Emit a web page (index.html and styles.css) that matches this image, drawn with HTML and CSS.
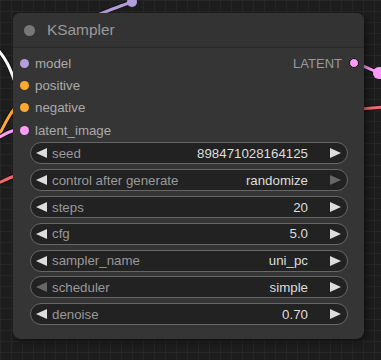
FILE: index.html
```html
<!DOCTYPE html>
<html lang="en">
<head>
  <meta charset="UTF-8">
  <meta name="viewport" content="width=device-width, initial-scale=1.0">
  <title>KSampler</title>
  <link rel="stylesheet" href="styles.css">
</head>
<body>
  <div class="canvas">
    <!-- links behind the node -->
    <svg class="wires" width="381" height="360" viewBox="0 0 381 360">
      <path class="edge" d="M95 16 C110 10 120 6 132 2" stroke="#111" stroke-width="5"/>
      <path d="M95 16 C110 10 120 6 132 2" stroke="#b39ddb" stroke-width="3"/>
      <circle cx="132" cy="2" r="5" fill="#b39ddb"/>

      <path d="M-4 48 C6 58 10 68 15 82" stroke="#111" stroke-width="5"/>
      <path d="M-4 48 C6 58 10 68 15 82" stroke="#fff" stroke-width="3"/>

      <path d="M-2 137 C4 126 8 116 15 108" stroke="#111" stroke-width="5"/>
      <path d="M-2 137 C4 126 8 116 15 108" stroke="#ffa931" stroke-width="3"/>
      <path d="M-2 138 C4 134 8 132 15 130" stroke="#111" stroke-width="5"/>
      <path d="M-2 138 C4 134 8 132 15 130" stroke="#ff9cf9" stroke-width="3"/>
      <path d="M-2 183 C4 181 8 178 15 176" stroke="#111" stroke-width="5"/>
      <path d="M-2 183 C4 181 8 178 15 176" stroke="#f06a6a" stroke-width="3"/>

      <path d="M358 64 C366 67 372 70 379 73" stroke="#111" stroke-width="5"/>
      <path d="M358 64 C366 67 372 70 379 73" stroke="#ff9cf9" stroke-width="3"/>
      <circle cx="379" cy="73" r="6" fill="#ff9cf9"/>
      <path d="M360 109 L383 107" stroke="#111" stroke-width="5"/>
      <path d="M360 109 L383 107" stroke="#f06a6a" stroke-width="3"/>
    </svg>

    <div class="node">
      <div class="title">
        <span class="title-dot"></span>
        <span class="title-text">KSampler</span>
      </div>

      <div class="slots">
        <div class="inputs">
          <div class="slot"><span class="dot model"></span>model</div>
          <div class="slot"><span class="dot cond"></span>positive</div>
          <div class="slot"><span class="dot cond"></span>negative</div>
          <div class="slot"><span class="dot latent"></span>latent_image</div>
        </div>
        <div class="outputs">
          <div class="slot out">LATENT<span class="dot latent ring"></span></div>
        </div>
      </div>

      <div class="widgets">
        <div class="widget">
          <svg class="arr" viewBox="0 0 11 10"><path d="M0 5 L11 0 L11 10 Z"/></svg>
          <span class="label">seed</span>
          <span class="value">898471028164125</span>
          <svg class="arr" viewBox="0 0 11 10"><path d="M11 5 L0 0 L0 10 Z"/></svg>
        </div>
        <div class="widget">
          <svg class="arr" viewBox="0 0 11 10"><path d="M0 5 L11 0 L11 10 Z"/></svg>
          <span class="label">control after generate</span>
          <span class="value">randomize</span>
          <svg class="arr off" viewBox="0 0 11 10"><path d="M11 5 L0 0 L0 10 Z"/></svg>
        </div>
        <div class="widget">
          <svg class="arr" viewBox="0 0 11 10"><path d="M0 5 L11 0 L11 10 Z"/></svg>
          <span class="label">steps</span>
          <span class="value">20</span>
          <svg class="arr" viewBox="0 0 11 10"><path d="M11 5 L0 0 L0 10 Z"/></svg>
        </div>
        <div class="widget">
          <svg class="arr" viewBox="0 0 11 10"><path d="M0 5 L11 0 L11 10 Z"/></svg>
          <span class="label">cfg</span>
          <span class="value">5.0</span>
          <svg class="arr" viewBox="0 0 11 10"><path d="M11 5 L0 0 L0 10 Z"/></svg>
        </div>
        <div class="widget">
          <svg class="arr" viewBox="0 0 11 10"><path d="M0 5 L11 0 L11 10 Z"/></svg>
          <span class="label">sampler_name</span>
          <span class="value">uni_pc</span>
          <svg class="arr" viewBox="0 0 11 10"><path d="M11 5 L0 0 L0 10 Z"/></svg>
        </div>
        <div class="widget">
          <svg class="arr off" viewBox="0 0 11 10"><path d="M0 5 L11 0 L11 10 Z"/></svg>
          <span class="label">scheduler</span>
          <span class="value">simple</span>
          <svg class="arr" viewBox="0 0 11 10"><path d="M11 5 L0 0 L0 10 Z"/></svg>
        </div>
        <div class="widget">
          <svg class="arr" viewBox="0 0 11 10"><path d="M0 5 L11 0 L11 10 Z"/></svg>
          <span class="label">denoise</span>
          <span class="value">0.70</span>
          <svg class="arr" viewBox="0 0 11 10"><path d="M11 5 L0 0 L0 10 Z"/></svg>
        </div>
      </div>
    </div>
  </div>
</body>
</html>
```

FILE: styles.css
```css
body {
  margin: 0;
  background: #1d1d1d;
  font-family: "Liberation Sans", Arial, sans-serif;
}
.canvas {
  position: relative;
  width: 381px;
  height: 360px;
  overflow: hidden;
  box-sizing: border-box;
  padding: 13px 0 0 13px;
  background-color: #1d1d1d;
  background-image:
    linear-gradient(to right, #262626 1px, transparent 1px),
    linear-gradient(to bottom, #262626 1px, transparent 1px);
  background-size: 11px 11px;
}
.wires {
  position: absolute;
  left: 0;
  top: 0;
}
.wires path {
  fill: none;
  stroke-linecap: round;
}
.node {
  position: relative;
  width: 351px;
  border-radius: 8px;
  background: #353535;
  box-shadow: 3px 3px 6px rgba(0, 0, 0, 0.45);
  padding-bottom: 14px;
}
.title {
  height: 34px;
  display: flex;
  align-items: center;
  padding-left: 11px;
  background: #333;
  border-radius: 8px 8px 0 0;
  border-bottom: 1px solid #2a2a2a;
}
.title-dot {
  width: 11px;
  height: 11px;
  border-radius: 50%;
  background: #777;
}
.title-text {
  margin-left: 12px;
  font-size: 15.4px;
  color: #999;
}
.slots {
  display: flex;
  justify-content: space-between;
  padding-top: 4px;
}
.inputs {
  padding-left: 7px;
}
.outputs {
  padding-right: 5px;
}
.slot {
  height: 22.3px;
  display: flex;
  align-items: center;
  font-size: 13.3px;
  color: #aaa;
}
.slot.out {
  font-size: 13px;
  color: #999;
}
.dot {
  width: 9px;
  height: 9px;
  border-radius: 50%;
  margin-right: 6px;
  box-sizing: border-box;
}
.slot.out .dot {
  margin: 0 0 0 7px;
}
.dot.model { background: #b39ddb; }
.dot.cond { background: #ffa931; }
.dot.latent { background: #ff9cf9; }
.dot.ring {
  width: 10px;
  height: 10px;
  border: 1.5px solid #111;
}
.widgets {
  display: flex;
  flex-direction: column;
  gap: 4.8px;
  margin: 1.3px 16px 0 17px;
}
.widget {
  height: 22px;
  box-sizing: border-box;
  display: flex;
  align-items: center;
  padding: 0 6px 0 5px;
  border: 1px solid #666;
  border-radius: 11px;
  background: #222;
  font-size: 13.3px;
}
.arr {
  width: 11px;
  height: 10px;
  fill: #ddd;
  flex: none;
}
.arr.off {
  fill: #666;
}
.label {
  margin-left: 5px;
  color: #999;
}
.value {
  margin-left: auto;
  margin-right: 22px;
  color: #ddd;
}
```
